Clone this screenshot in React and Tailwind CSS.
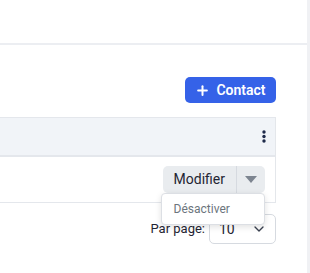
import { Plus, ChevronDown } from 'lucide-react';

const App = () => {
  return (
    <div className="w-[310px] h-[273px] bg-white flex overflow-hidden font-['Roboto',sans-serif] text-[#212529]">
      <div className="flex-1 min-w-0 flex flex-col">
        {/* Top bar */}
        <div className="h-[45px] border-b-2 border-[#eceef2] shrink-0" />

        <div className="pr-[31px] flex flex-col items-end">
          {/* Add contact */}
          <button className="mt-[32px] h-[26px] w-[91px] rounded-[5px] bg-[#3562e8] text-white text-[14px] font-semibold flex items-center justify-center gap-[6px]">
            <Plus className="w-[15px] h-[15px]" strokeWidth={3.2} />
            <span>Contact</span>
          </button>

          {/* Table */}
          <div className="mt-[14px] w-full border-r border-[#e4e7eb]">
            <div className="h-[40px] bg-[#f1f4f8] border-t border-b-2 border-[#e4e7ec] flex items-center justify-end pr-[9px]">
              <svg width="4" height="13" viewBox="0 0 4 13" className="text-[#1e2a4a]">
                <circle cx="2" cy="2" r="1.7" fill="currentColor" />
                <circle cx="2" cy="6.5" r="1.7" fill="currentColor" />
                <circle cx="2" cy="11" r="1.7" fill="currentColor" />
              </svg>
            </div>
            <div className="h-[46px] border-b border-[#e4e7ec] flex items-center justify-end pr-[10px]">
              <div className="relative flex h-[27px] rounded-[5px] bg-[#e9ecef]">
                <span className="px-[11px] flex items-center text-[14px] text-[#1f2533] border-r border-[#d6dae0]">Modifier</span>
                <span className="w-[28px] flex items-center justify-center">
                  <svg width="12" height="7" viewBox="0 0 12 7">
                    <path d="M0 0h12L6 7z" fill="#7d8590" />
                  </svg>
                </span>
                {/* Dropdown menu */}
                <div className="absolute left-[-2px] top-[27px] w-[104px] h-[32px] bg-white rounded-[4px] border border-[#dcdfe4] shadow-[0_2px_6px_rgba(0,0,0,0.12)] flex items-center pl-[12px] text-[12px] text-[#6c757d] z-10">
                  Désactiver
                </div>
              </div>
            </div>
          </div>

          {/* Pagination */}
          <div className="mt-[11px] flex items-center gap-[4px]">
            <span className="text-[13px] text-[#1f2533]">Par page:</span>
            <div className="w-[67px] h-[30px] rounded-[5px] border border-[#d6dae0] flex items-center justify-between pl-[9px] pr-[8px] text-[14px] text-[#1f2533]">
              <span>10</span>
              <ChevronDown className="w-[16px] h-[16px] text-[#3a4150]" strokeWidth={2} />
            </div>
          </div>
        </div>
      </div>
      <div className="w-[3px] bg-[#f0f1f4]" />
    </div>
  );
};

export default App;
